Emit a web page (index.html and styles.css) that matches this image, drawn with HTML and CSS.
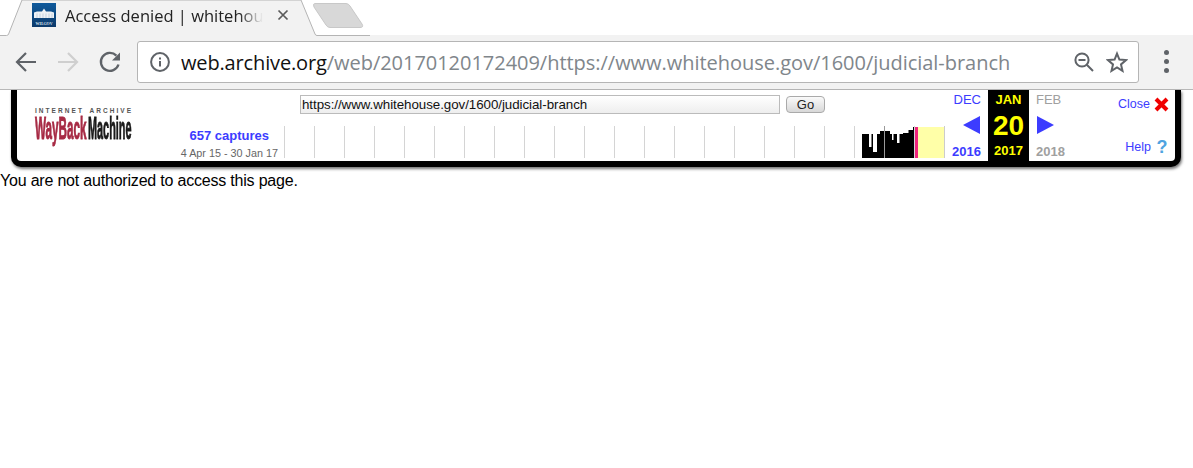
FILE: index.html
```html
<!DOCTYPE html>
<html lang="en">
<head>
<meta charset="utf-8">
<title>Access denied | whitehouse.gov</title>
<link rel="stylesheet" href="styles.css">
</head>
<body>
<header class="chrome">
  <div class="tabstrip">
    <svg class="tab-shape" width="370" height="36" viewBox="0 0 370 36">
      <path d="M0 35.5H6.5Q8 35.5 8.6 34L22 0H301L315 34Q315.6 35.5 317 35.5H370" fill="#f2f2f2" stroke="#b4b4b4"/>
      <path d="M315 3.5H346Q348.5 3.5 350 6L362 24Q364 27.5 360 27.5H330Q327.5 27.5 326 25L314 7Q312.5 3.5 315 3.5Z" fill="#d8d8d8" stroke="#c8c8c8"/>
    </svg>
    <div class="tab">
      <svg class="favicon" width="24" height="24" viewBox="0 0 24 24">
        <defs><linearGradient id="fav" x1="0" y1="0" x2="0" y2="1"><stop offset="0" stop-color="#0f5a9c"/><stop offset="1" stop-color="#0d3a6a"/></linearGradient></defs>
        <rect width="24" height="24" fill="url(#fav)"/>
        <path d="M2 15V9.5L5 8.5H10L12 5.5L14 8.5H19L22 9.5V15Z" fill="#eef2f6"/>
        <path d="M5 10.5V15M8 10.5V15M11 10.5V15M14 10.5V15M17 10.5V15M20 10.5V15" stroke="#b3c4d6" stroke-width=".7"/>
        <text class="fav-text" x="12" y="21.5" text-anchor="middle">WH.GOV</text>
      </svg>
      <span class="tab-title">Access denied | whitehouse.gov</span>
      <svg class="tab-close" width="12" height="12" viewBox="0 0 12 12"><path d="M1.5 1.5L10.5 10.5M10.5 1.5L1.5 10.5" stroke="#5a5a5a" stroke-width="1.7"/></svg>
    </div>
  </div>
  <div class="toolbar">
    <svg class="nav" width="24" height="24" viewBox="0 0 24 24"><path d="M22 12H3.5M12 3L3 12L12 21" fill="none" stroke="#5f6368" stroke-width="2.2"/></svg>
    <svg class="nav" width="24" height="24" viewBox="0 0 24 24"><path d="M2 12H20.5M12 3L21 12L12 21" fill="none" stroke="#cfcfcf" stroke-width="2.2"/></svg>
    <svg class="nav" width="24" height="24" viewBox="0 0 24 24"><path d="M20.5 14.5A9 9 0 1 1 18.4 5.6" fill="none" stroke="#5f6368" stroke-width="2.3"/><path d="M22 2.5V10.5H14Z" fill="#5f6368"/></svg>
    <div class="omnibox">
      <svg class="info" width="20" height="20" viewBox="0 0 20 20"><circle cx="10" cy="10" r="8.9" fill="none" stroke="#5f6368" stroke-width="2"/><rect x="9" y="9" width="2" height="5.5" fill="#5f6368"/><rect x="9" y="5.5" width="2" height="2" fill="#5f6368"/></svg>
      <div class="url"><span class="host">web.archive.org</span>/web/20170120172409/https://www.whitehouse.gov/1600/judicial-branch</div>
      <svg class="zoom-out" width="20" height="20" viewBox="0 0 20 20"><circle cx="8" cy="8" r="6.6" fill="none" stroke="#5f6368" stroke-width="2"/><path d="M4.5 8H11.5M12.8 12.8L19 19" stroke="#5f6368" stroke-width="2"/></svg>
      <svg class="star" width="22" height="22" viewBox="0 0 22 22"><path d="M11 2.6L13.4 8.6L20 9.1L15 13.4L16.5 19.8L11 16.4L5.5 19.8L7 13.4L2 9.1L8.6 8.6Z" fill="none" stroke="#5f6368" stroke-width="2"/></svg>
    </div>
    <div class="menu"><i></i><i></i><i></i></div>
  </div>
</header>

<section class="wayback">
  <div class="logo">
    <div class="logo-top">INTERNET ARCHIVE</div>
    <div class="logo-main"><span class="logo-red"><span>WayBack</span></span><span class="logo-black"><span>Machine</span></span></div>
  </div>
  <div class="captures">
    <a class="captures-count">657 captures</a>
    <span class="captures-range">4 Apr 15 - 30 Jan 17</span>
  </div>
  <div class="middle">
    <form class="url-form">
      <div class="url-input">https://www.whitehouse.gov/1600/judicial-branch</div>
      <div class="go">Go</div>
    </form>
    <div class="spark">
      <div class="year"></div><div class="year"></div><div class="year"></div><div class="year"></div>
      <div class="year"></div><div class="year"></div><div class="year"></div><div class="year"></div>
      <div class="year"></div><div class="year"></div><div class="year"></div><div class="year"></div>
      <div class="year"></div><div class="year"></div><div class="year"></div><div class="year"></div>
      <div class="year"></div><div class="year"></div><div class="year"></div>
      <div class="year year-bars">
        <svg width="60" height="32" viewBox="0 0 60 32">
          <path d="M8 32V8H15V21H17.5V8H19V26H23V8H26V5H36V8H38V14H39.5V8H43V17H45.5V8H49V7H54.5V4H59V1H60V32Z" fill="#000"/>
          <path d="M30.5 0V32" stroke="#9a9a9a" stroke-width="1"/>
        </svg>
      </div>
      <div class="year year-last"><span class="now"></span><span class="fill"></span></div>
    </div>
  </div>
  <div class="month month-prev">
    <a class="m-name">DEC</a>
    <svg class="arrow" width="18" height="18" viewBox="0 0 18 18"><path d="M17 0V18L0 9Z" fill="#3c3cff"/></svg>
    <a class="m-year">2016</a>
  </div>
  <div class="month month-now">
    <span class="m-name">JAN</span>
    <span class="m-day">20</span>
    <span class="m-year">2017</span>
  </div>
  <div class="month month-next">
    <span class="m-name">FEB</span>
    <svg class="arrow" width="18" height="18" viewBox="0 0 18 18"><path d="M1 0V18L18 9Z" fill="#3c3cff"/></svg>
    <span class="m-year">2018</span>
  </div>
  <div class="links">
    <a class="link">Close <svg width="15" height="15" viewBox="0 0 15 15"><path d="M2 2L13 13M13 2L2 13" stroke="#f00000" stroke-width="4"/></svg></a>
    <a class="link">Help <span class="q">?</span></a>
  </div>
</section>

<p class="message">You are not authorized to access this page.</p>
</body>
</html>
```

FILE: styles.css
```css
* { box-sizing: border-box; }
html, body { margin: 0; padding: 0; background: #fff; overflow: hidden; }
body { width: 1193px; height: 468px; font-family: "Liberation Sans", Arial, sans-serif; color: #000; }

.tabstrip { position: relative; height: 35px; background: #fff; padding-left: 32px; }
.tab-shape { position: absolute; left: 0; top: 0; }
.tab { position: relative; display: flex; align-items: center; height: 35px; padding-bottom: 5px; }
.favicon { flex: none; display: block; }
.fav-text { font-family: "Liberation Serif", serif; font-size: 4px; font-weight: 700; fill: #dbe4ee; }
.tab-title { display: block; width: 198px; margin-left: 9px; overflow: hidden; white-space: nowrap; font-family: "Open Sans", sans-serif; font-size: 16.5px; color: #222;
  -webkit-mask-image: linear-gradient(90deg, #000 88%, transparent 100%); mask-image: linear-gradient(90deg, #000 88%, transparent 100%); }
.tab-close { flex: none; margin-left: 14px; }

.toolbar { display: flex; align-items: center; height: 55px; background: #f2f2f2; border-bottom: 1px solid #b8b8b8; padding: 0 0 1px 14px; }
.nav { flex: none; margin-right: 18px; }
.omnibox { display: flex; align-items: center; width: 1002px; height: 42px; margin-left: -3px; background: #fff; border: 1px solid #b5b5b5; border-radius: 3px; padding: 0 10px 0 12px; }
.info { flex: none; margin-top: 1px; }
.url { flex: 1; margin-left: 11px; padding-top: 2px; font-family: "Open Sans", sans-serif; font-size: 20px; letter-spacing: -.03px; color: #80868b; white-space: nowrap; overflow: hidden; }
.host { color: #111; letter-spacing: -.15px; }
.zoom-out { flex: none; margin-right: 12px; }
.star { flex: none; }
.menu { display: flex; flex-direction: column; gap: 4px; margin-left: 25px; }
.menu i { display: block; width: 5px; height: 5px; border-radius: 50%; background: #5f6368; }

.wayback { display: flex; width: 1170px; height: 77px; margin-left: 11px; border: 6px solid #000; border-top: 0; border-radius: 0 0 10px 10px; background: #fff; box-shadow: 1px 2px 3px rgba(0,0,0,.55); }
.logo { flex: none; width: 137px; padding: 17px 0 0 18px; }
.logo-top { font-size: 6.5px; font-weight: 700; letter-spacing: 2.05px; word-spacing: 2px; line-height: 7px; color: #555; white-space: nowrap; }
.logo-main { display: flex; width: 98px; height: 26px; margin-top: 1px; }
.logo-red, .logo-black { display: block; flex: none; height: 26px; }
.logo-red span, .logo-black span { display: block; font-weight: 700; font-size: 32px; line-height: 26px; transform-origin: 0 50%; white-space: nowrap; -webkit-text-stroke: 1px currentColor; }
.logo-red { width: 53px; }
.logo-black { width: 44px; }
.logo-red span { color: #a72b45; transform: scale(.365, 1); }
.logo-black span { color: #1a1a1a; transform: scale(.34, 1); }

.captures { flex: none; width: 130px; display: flex; flex-direction: column; align-items: flex-end; padding: 38px 6px 0 0; }
.captures-count { font-size: 13px; font-weight: 700; line-height: 16px; color: #3c3cff; padding-right: 9px; }
.captures-range { font-size: 10.8px; line-height: 12px; margin-top: 3px; color: #666; white-space: nowrap; }

.middle { flex: none; width: 661px; display: flex; flex-direction: column; }
.url-form { display: flex; align-items: center; height: 36px; padding: 5px 0 12px 16px; }
.url-input { width: 480px; height: 19px; border: 1px solid #bbb; background: linear-gradient(#fff, #eee); font-size: 13.33px; line-height: 17px; letter-spacing: -.05px; padding-left: 1px; color: #111; white-space: nowrap; overflow: hidden; }
.go { width: 39px; height: 17px; margin-left: 6px; border: 1px solid #aaa; border-radius: 4px; background: linear-gradient(#fafafa, #d8d8d8); font-size: 13px; line-height: 15px; text-align: center; color: #222; }
.spark { display: flex; height: 32px; }
.year { flex: none; width: 30px; height: 32px; border-left: 1px solid #d4d4d4; }
.year-bars { width: 60px; position: relative; }
.year-bars svg { display: block; position: absolute; left: -1px; top: 0; }
.year-last { display: flex; width: 31px; padding-top: 1px; border-right: 1px solid #ccc; }
.now { display: block; flex: none; width: 3px; background: #f0257d; }
.fill { display: block; flex: 1; background: #ffffa8; }

.month { flex: none; display: flex; flex-direction: column; color: #3c3cff; }
.m-name { display: block; font-size: 13px; line-height: 15px; margin-top: 2px; height: 15px; }
.arrow { display: block; margin-top: 9px; }
.m-year { display: block; font-size: 13px; font-weight: 700; line-height: 15px; margin-top: 10px; }
.month-prev { width: 43px; align-items: flex-end; padding-right: 7px; }
.month-now { width: 41px; align-items: center; background: #000; color: #ff0; }
.month-now .m-name { font-weight: 700; }
.m-day { display: block; font-size: 28px; font-weight: 700; line-height: 30px; margin-top: 4px; }
.month-now .m-year { margin-top: 2px; }
.month-next { width: 42px; padding-left: 7px; color: #a0a0a0; }

.links { flex: none; width: 104px; display: flex; flex-direction: column; align-items: flex-end; justify-content: space-between; padding: 7px 6px 6px 0; }
.link { display: flex; align-items: center; gap: 4px; font-size: 12.5px; line-height: 15px; color: #3c3cff; }
.q { font-size: 18px; font-weight: 700; line-height: 15px; color: #4fa3e0; width: 14px; text-align: center; }

.message { margin: 6px 0 0; font-size: 16px; letter-spacing: -.2px; line-height: 16px; }
```
